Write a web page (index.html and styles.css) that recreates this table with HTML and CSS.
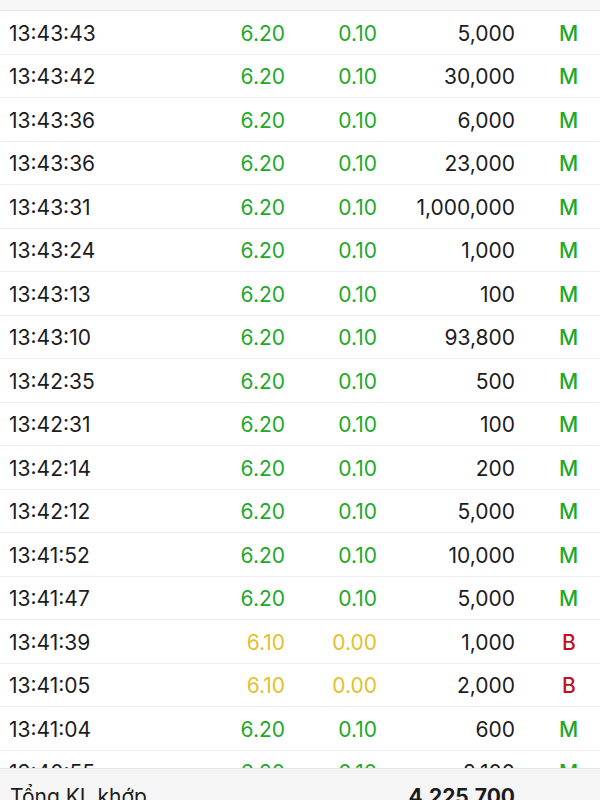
FILE: index.html
```html
<!DOCTYPE html>
<html lang="vi">
<head>
<meta charset="utf-8">
<link rel="stylesheet" href="styles.css">
</head>
<body>
<div class="screen">
  <div class="topbar"></div>
  <div class="list">
    <div class="row"><span class="time">13:43:43</span><span class="price up">6.20</span><span class="chg up">0.10</span><span class="vol">5,000</span><span class="side m">M</span></div>
    <div class="row"><span class="time">13:43:42</span><span class="price up">6.20</span><span class="chg up">0.10</span><span class="vol">30,000</span><span class="side m">M</span></div>
    <div class="row"><span class="time">13:43:36</span><span class="price up">6.20</span><span class="chg up">0.10</span><span class="vol">6,000</span><span class="side m">M</span></div>
    <div class="row"><span class="time">13:43:36</span><span class="price up">6.20</span><span class="chg up">0.10</span><span class="vol">23,000</span><span class="side m">M</span></div>
    <div class="row"><span class="time">13:43:31</span><span class="price up">6.20</span><span class="chg up">0.10</span><span class="vol">1,000,000</span><span class="side m">M</span></div>
    <div class="row"><span class="time">13:43:24</span><span class="price up">6.20</span><span class="chg up">0.10</span><span class="vol">1,000</span><span class="side m">M</span></div>
    <div class="row"><span class="time">13:43:13</span><span class="price up">6.20</span><span class="chg up">0.10</span><span class="vol">100</span><span class="side m">M</span></div>
    <div class="row"><span class="time">13:43:10</span><span class="price up">6.20</span><span class="chg up">0.10</span><span class="vol">93,800</span><span class="side m">M</span></div>
    <div class="row"><span class="time">13:42:35</span><span class="price up">6.20</span><span class="chg up">0.10</span><span class="vol">500</span><span class="side m">M</span></div>
    <div class="row"><span class="time">13:42:31</span><span class="price up">6.20</span><span class="chg up">0.10</span><span class="vol">100</span><span class="side m">M</span></div>
    <div class="row"><span class="time">13:42:14</span><span class="price up">6.20</span><span class="chg up">0.10</span><span class="vol">200</span><span class="side m">M</span></div>
    <div class="row"><span class="time">13:42:12</span><span class="price up">6.20</span><span class="chg up">0.10</span><span class="vol">5,000</span><span class="side m">M</span></div>
    <div class="row"><span class="time">13:41:52</span><span class="price up">6.20</span><span class="chg up">0.10</span><span class="vol">10,000</span><span class="side m">M</span></div>
    <div class="row"><span class="time">13:41:47</span><span class="price up">6.20</span><span class="chg up">0.10</span><span class="vol">5,000</span><span class="side m">M</span></div>
    <div class="row"><span class="time">13:41:39</span><span class="price ref">6.10</span><span class="chg ref">0.00</span><span class="vol">1,000</span><span class="side b">B</span></div>
    <div class="row"><span class="time">13:41:05</span><span class="price ref">6.10</span><span class="chg ref">0.00</span><span class="vol">2,000</span><span class="side b">B</span></div>
    <div class="row"><span class="time">13:41:04</span><span class="price up">6.20</span><span class="chg up">0.10</span><span class="vol">600</span><span class="side m">M</span></div>
    <div class="row"><span class="time">13:40:55</span><span class="price up">6.20</span><span class="chg up">0.10</span><span class="vol">2,100</span><span class="side m">M</span></div>
  </div>
  <div class="footer">
    <span class="total-label">Tổng KL khớp</span>
    <span class="total-value">4,225,700</span>
  </div>
</div>
</body>
</html>
```

FILE: styles.css
```css
html, body {
  margin: 0;
  padding: 0;
  background: #ffffff;
}
.screen {
  width: 600px;
  height: 800px;
  overflow: hidden;
  display: flex;
  flex-direction: column;
  font-family: "Inter", "Liberation Sans", sans-serif;
  color: #1c1c1e;
}
.topbar {
  flex: 0 0 10px;
  background: #f7f7f7;
  border-bottom: 1px solid #e6e6e6;
}
.list {
  flex: 0 0 757px;
  overflow: hidden;
}
.row {
  height: 43.5px;
  box-sizing: border-box;
  border-bottom: 1px solid #efefef;
  display: grid;
  grid-template-columns: 110px 166px 92px 138px 1fr;
  align-items: center;
  font-size: 21px;
  padding: 2px 0 0 9px;
}
.time { text-align: left; }
.price, .chg, .vol { text-align: right; }
.side { text-align: left; padding-left: 44px; font-weight: 500; }
.up { color: #1fa82a; }
.ref { color: #e3c12b; }
.m { color: #1fa82a; }
.b { color: #c0121c; padding-left: 47px; }
.footer {
  flex: 1 0 auto;
  background: #f5f5f5;
  border-top: 1px solid #e4e4e4;
  display: flex;
  align-items: flex-start;
  padding: 15px 0 0 10px;
  font-size: 21px;
}
.total-label {
  width: 398px;
}
.total-value {
  font-weight: 700;
  width: 107px;
  text-align: right;
}
```
